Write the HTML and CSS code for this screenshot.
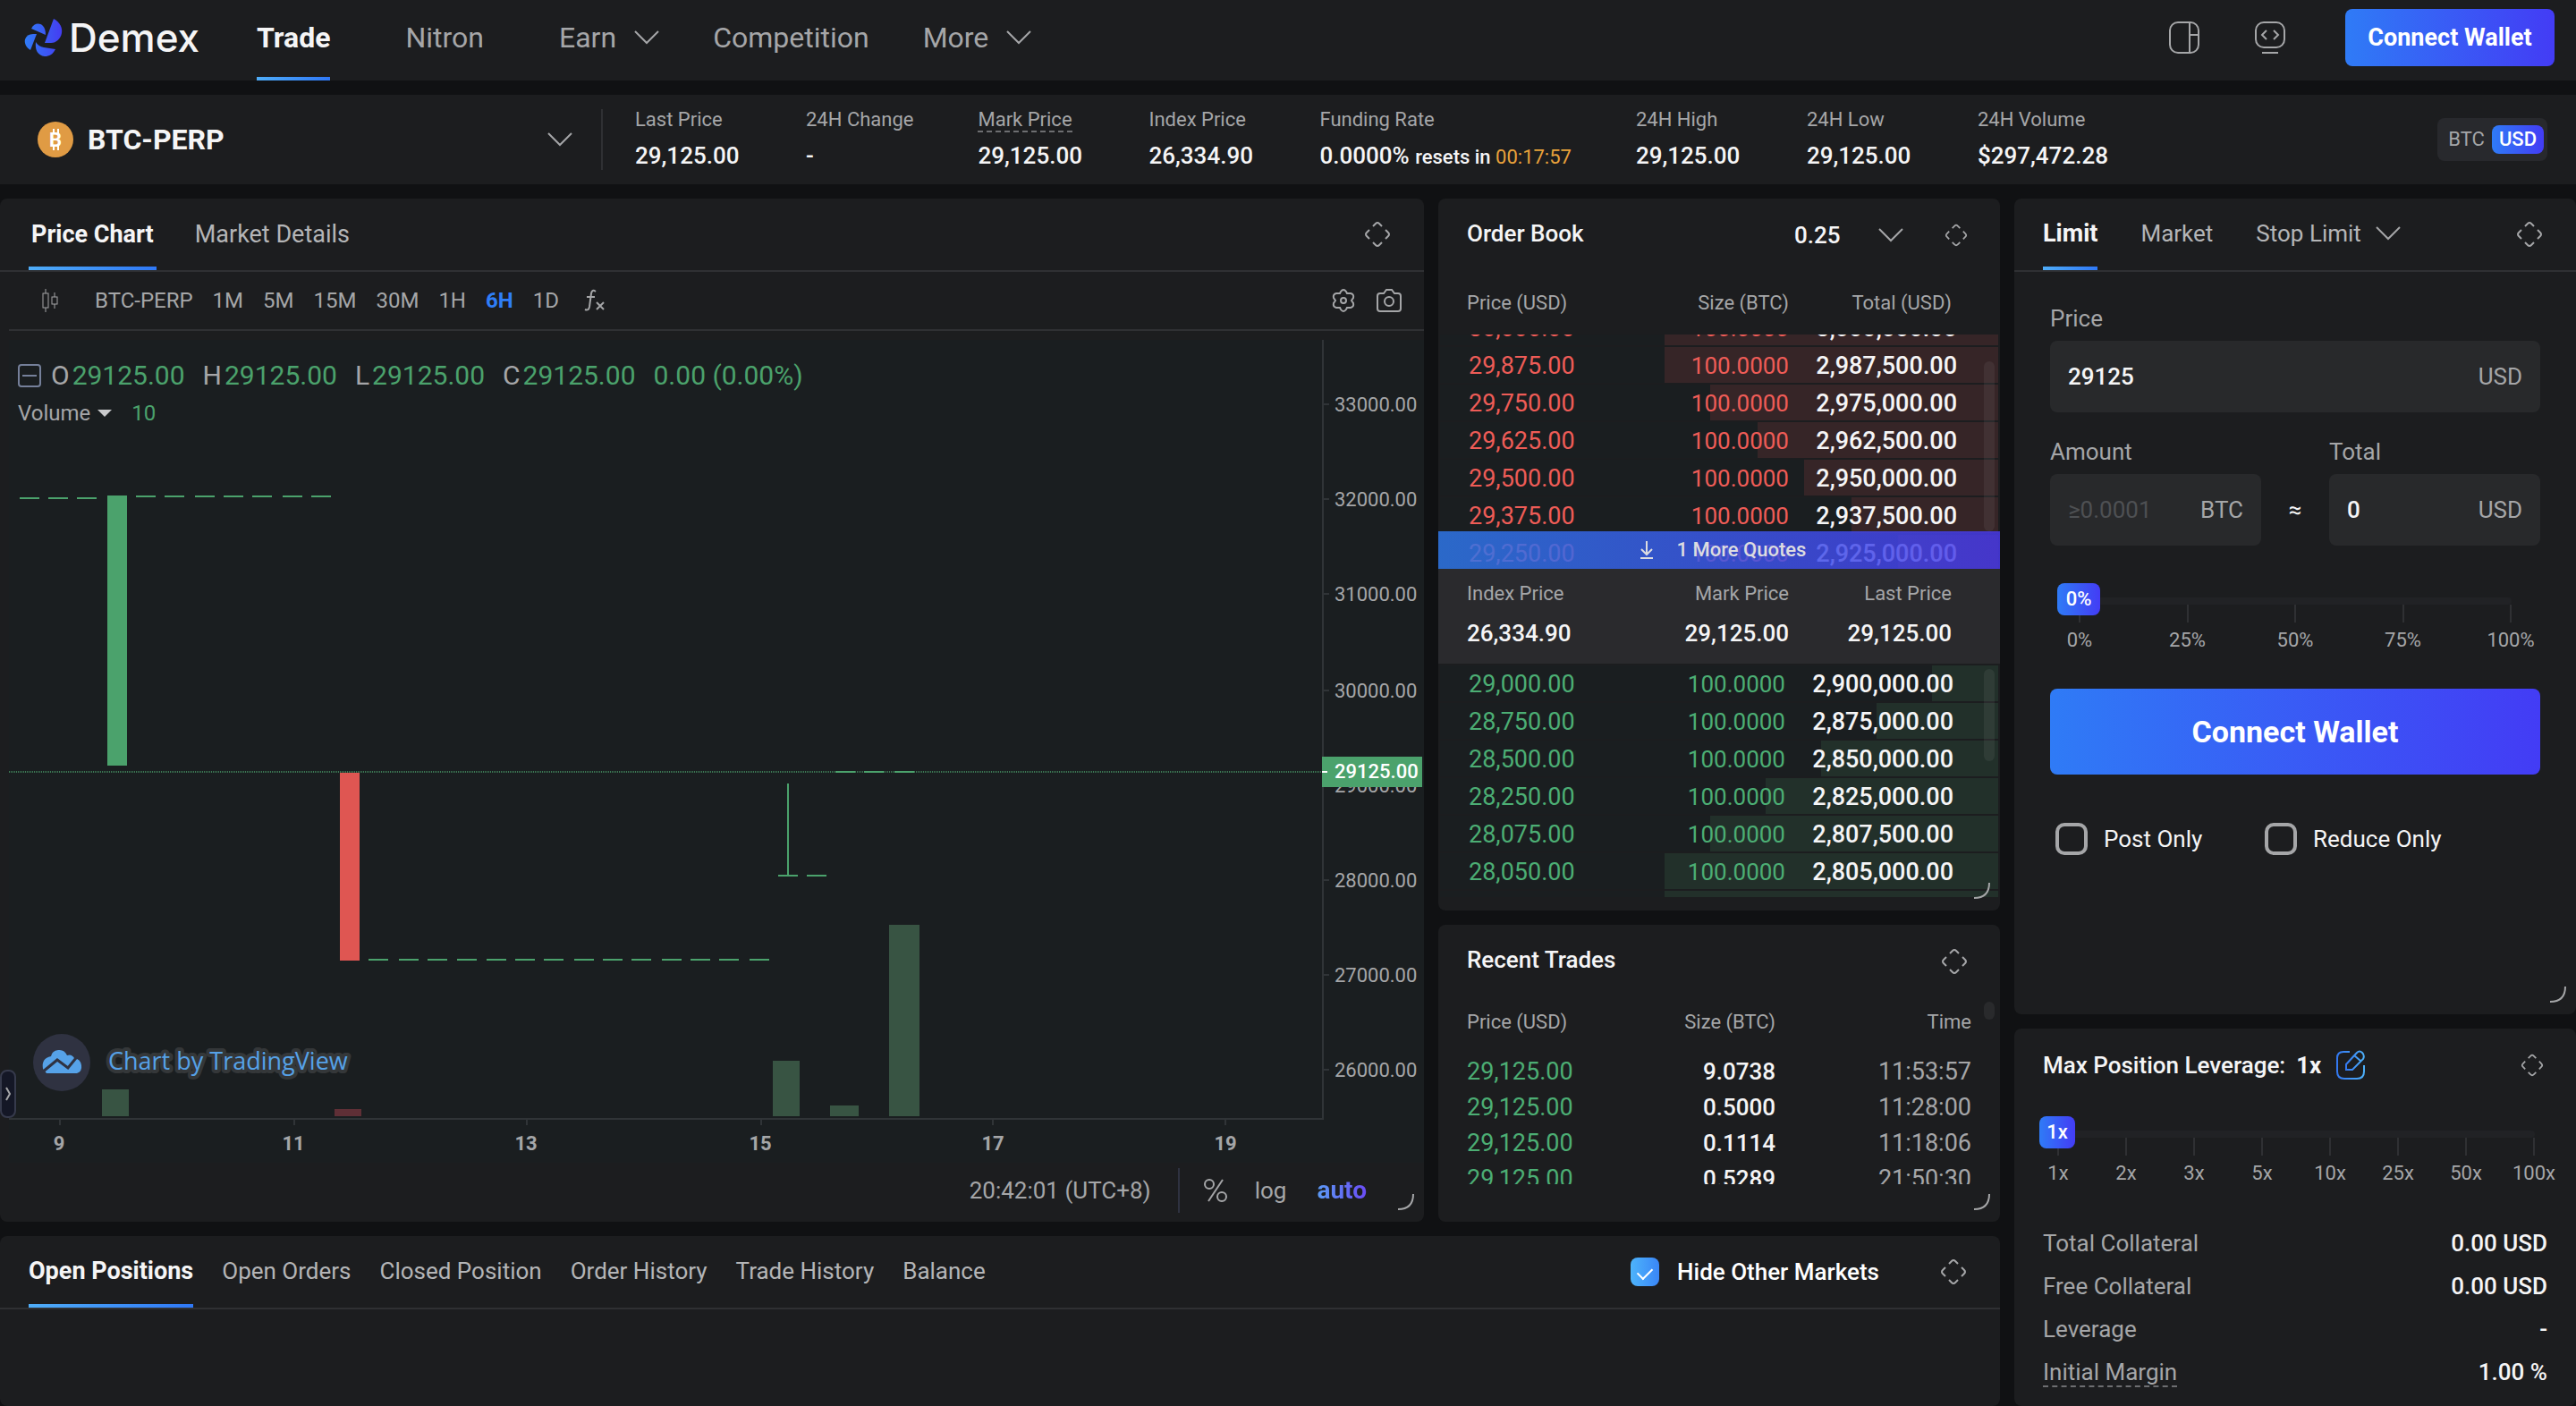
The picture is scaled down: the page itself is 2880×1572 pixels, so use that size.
FILE: index.html
```html
<!DOCTYPE html>
<html lang="en">
<head>
    <meta charset="UTF-8" />
    <meta name="viewport" content="width=device-width, initial-scale=1.0" />
    <title>Demex | BTC-PERP</title>
    <link rel="stylesheet" href="styles.css">
</head>
<body>
    <!-- shared icons -->
    <svg class="sprite" aria-hidden="true">
        <symbol id="chevron" viewBox="0 0 28 16"><path d="M1 1l13 13L27 1" /></symbol>
        <symbol id="move" viewBox="0 0 30 30">
            <path d="M10 6l3-3q2-2 4 0l3 3M10 24l3 3q2 2 4 0l3-3M6 10l-3 3q-2 2 0 4l3 3M24 10l3 3q2 2 0 4l-3 3" />
        </symbol>
        <symbol id="corner" viewBox="0 0 20 20"><path d="M18 1Q18 18 1 18" /></symbol>
        <linearGradient id="sky" x1="0" x2="1">
            <stop offset="0" stop-color="#3378f0" />
            <stop offset="1" stop-color="#4db0fa" />
        </linearGradient>
    </svg>

    <header class="header">
        <a class="logo" href="#">
            <svg viewBox="27 20 44 44" width="44" height="44">
                <linearGradient id="logoFill" gradientUnits="userSpaceOnUse" x1="27" y1="0" x2="70" y2="0">
                    <stop offset="0" stop-color="#2f7df6" />
                    <stop offset="1" stop-color="#453bf2" />
                </linearGradient>
                <g fill="url(#logoFill)">
                    <path d="M35 32C38 26 44 25 48 29Q51 32 51 39Z" />
                    <path d="M60 21C67 25 70 31 69 37C68 43 63 48 57 48H50Z" />
                    <path d="M41 38L34 56C29 53 27 48 28 44Q30 38 37 38Z" />
                    <path d="M40 47Q43 52 49 53L62 55C59 61 55 63 50 63C42 62 39 56 40 47Z" />
                </g>
            </svg>
            Demex
        </a>
        <nav class="nav">
            <a class="nav-link plain active" href="#">Trade</a>
            <a class="nav-link plain" href="#">Nitron</a>
            <button class="nav-link">Earn <svg class="chevron"><use href="#chevron" /></svg></button>
            <a class="nav-link" href="#">Competition</a>
            <button class="nav-link">More <svg class="chevron"><use href="#chevron" /></svg></button>
        </nav>
        <button class="icon-btn" aria-label="Layout">
            <svg class="line" width="36" height="36" viewBox="0 0 36 36"><rect x="2" y="1" width="32" height="34" rx="9" /><path d="M24 1v34M24 15h10" /></svg>
        </button>
        <button class="icon-btn api" aria-label="API">
            <svg class="line" width="36" height="36" viewBox="0 0 36 36"><rect x="2" y="1" width="32" height="28" rx="9" /><path d="M14 10l-5 5 5 5M22 10l5 5-5 5M9 35h18" /></svg>
        </button>
        <button class="btn-primary header-connect">Connect Wallet</button>
    </header>

    <section class="market-bar">
        <button class="market-select">
            <svg width="40" height="40" viewBox="0 0 40 40">
                <circle cx="20" cy="20" r="20" fill="#e09b44" />
                <path d="M18 8v5M23 8v5M18 27v5M23 27v5" stroke="#fff" stroke-width="2" />
                <text class="coin-letter" x="20" y="28" text-anchor="middle">B</text>
            </svg>
            <span>BTC-PERP</span>
            <svg class="chevron"><use href="#chevron" /></svg>
        </button>
        <dl class="stats">
            <div><dt>Last Price</dt><dd>29,125.00</dd></div>
            <div><dt>24H Change</dt><dd>-</dd></div>
            <div><dt><span class="hint">Mark Price</span></dt><dd>29,125.00</dd></div>
            <div><dt>Index Price</dt><dd>26,334.90</dd></div>
            <div><dt>Funding Rate</dt><dd>0.0000% <small>resets in <em>00:17:57</em></small></dd></div>
            <div><dt>24H High</dt><dd>29,125.00</dd></div>
            <div><dt>24H Low</dt><dd>29,125.00</dd></div>
            <div><dt>24H Volume</dt><dd>$297,472.28</dd></div>
        </dl>
        <div class="unit-toggle">
            <button>BTC</button>
            <button class="active">USD</button>
        </div>
    </section>

    <main class="workspace">
        <div class="left">
            <div class="top">
                <section class="panel chart-panel">
                    <div class="tabs">
                        <button class="tab active">Price Chart</button>
                        <button class="tab">Market Details</button>
                        <svg class="move"><use href="#move" /></svg>
                    </div>
                    <div class="toolbar">
                        <svg class="line thin" width="20" height="28" viewBox="0 0 20 28"><rect x="2" y="6" width="6" height="16" /><path d="M5 1v5M5 22v5M15 5v5M15 18v5" /><rect x="12" y="10" width="6" height="8" /></svg>
                        <span class="symbol">BTC-PERP</span>
                        <button>1M</button>
                        <button>5M</button>
                        <button>15M</button>
                        <button>30M</button>
                        <button>1H</button>
                        <button class="active">6H</button>
                        <button>1D</button>
                        <button class="fx" aria-label="Indicators">
                            <svg class="line" width="24" height="26" viewBox="0 0 24 26"><path d="M13 3q-4-3-5 2L6 20q-1 5-5 3M3 9h9M14 15l8 8M22 15l-8 8" /></svg>
                        </button>
                        <button class="gear" aria-label="Settings">
                            <svg class="line" width="28" height="28" viewBox="0 0 28 28"><path d="M11 4q3-4 6 0l1 2 4 0q4 1 3 5l-2 3 2 3q1 4-3 5h-4l-1 2q-3 4-6 0l-1-2H6q-4-1-3-5l2-3-2-3q-1-4 3-5h4z" /><circle cx="14" cy="14" r="3" /></svg>
                        </button>
                        <button aria-label="Snapshot">
                            <svg class="line" width="30" height="28" viewBox="0 0 30 28"><path d="M5 6h4l3-4h6l3 4h4q3 0 3 3v14q0 3-3 3H5q-3 0-3-3V9q0-3 3-3z" /><circle cx="15" cy="15" r="5" /></svg>
                        </button>
                    </div>
                    <div class="chart">
                        <svg class="plot" viewBox="10 380 1582 920">
                            <!-- axes -->
                            <path class="axis" d="M1479 380v872M10 1251h1469" />
                            <path class="axis" d="M1480 452h6M1480 558h6M1480 664h6M1480 772h6M1480 984h6M1480 1090h6M1480 1196h6" />
                            <path class="axis" d="M67 1252v6M329 1252v6M589 1252v6M851 1252v6M1110 1252v6M1370 1252v6" />
                            <g class="price-label">
                                <text x="1492" y="460">33000.00</text>
                                <text x="1492" y="566">32000.00</text>
                                <text x="1492" y="672">31000.00</text>
                                <text x="1492" y="780">30000.00</text>
                                <text x="1492" y="886">29000.00</text>
                                <text x="1492" y="992">28000.00</text>
                                <text x="1492" y="1098">27000.00</text>
                                <text x="1492" y="1204">26000.00</text>
                            </g>
                            <g class="time-label">
                                <text x="66" y="1286">9</text>
                                <text x="328" y="1286">11</text>
                                <text x="588" y="1286">13</text>
                                <text x="850" y="1286">15</text>
                                <text x="1110" y="1286">17</text>
                                <text x="1370" y="1286">19</text>
                            </g>
                            <!-- volume -->
                            <g class="vol-up">
                                <rect x="114" y="1218" width="30" height="30" />
                                <rect x="864" y="1186" width="30" height="62" />
                                <rect x="928" y="1236" width="32" height="12" />
                                <rect x="994" y="1034" width="34" height="214" />
                            </g>
                            <rect class="vol-down" x="374" y="1240" width="30" height="8" />
                            <!-- candles -->
                            <path class="flat" d="M22 557h22M54 557h22M86 557h22M152 555h22M184 555h22M218 555h22M250 555h22M282 555h22M316 555h22M348 555h22" />
                            <path class="flat" d="M412 1073h22M446 1073h22M478 1073h22M511 1073h22M544 1073h22M576 1073h22M608 1073h22M642 1073h22M674 1073h22M706 1073h22M740 1073h22M772 1073h22M804 1073h22M838 1073h22" />
                            <path class="flat" d="M870 979h22M902 979h22M881 876v103" />
                            <path class="last-line" d="M10 863h1468" />
                            <path class="flat" d="M934 863h22M966 863h22M1000 863h22" />
                            <rect class="up" x="120" y="554" width="22" height="302" />
                            <rect class="down" x="380" y="864" width="22" height="210" />
                            <!-- last price tag -->
                            <rect class="up" x="1478" y="846" width="112" height="34" />
                            <path d="M1478 863h6" stroke="#fff" stroke-width="2" />
                            <text class="tag" x="1492" y="870">29125.00</text>
                            <!-- attribution -->
                            <circle cx="69" cy="1188" r="32" fill="#2f3241" />
                            <path d="M52 1200h34q6-2 5-9t-8-8q-3-5-8-3-3-7-10-6-7 1-8 7-11 2-9 14z" fill="#56a2e8" />
                            <path d="M47 1199l17-14 12 9 13-16" fill="none" stroke="#2f3241" stroke-width="3" />
                            <text class="credit" x="121" y="1196">Chart by TradingView</text>
                        </svg>
                        <div class="legend">
                            <div class="ohlc">
                                <svg width="26" height="26" viewBox="0 0 26 26"><rect x="1" y="1" width="24" height="24" rx="3" /><path d="M5 13h16" /></svg>
                                <span>O<b>29125.00</b></span>
                                <span>H<b>29125.00</b></span>
                                <span>L<b>29125.00</b></span>
                                <span>C<b>29125.00</b></span>
                                <b>0.00 (0.00%)</b>
                            </div>
                            <div class="volume">Volume <i></i> <b>10</b></div>
                        </div>
                        <button class="drawer" aria-label="Show drawing toolbar">
                            <svg class="line" width="8" height="16" viewBox="0 0 8 16"><path d="M2 1l4 7-4 7" /></svg>
                        </button>
                    </div>
                    <div class="chart-foot">
                        <button>20:42:01 (UTC+8)</button>
                        <span class="divider"></span>
                        <button aria-label="Percent">
                            <svg class="line" width="28" height="26" viewBox="0 0 28 26"><circle cx="7" cy="6" r="5" /><circle cx="21" cy="20" r="5" /><path d="M22 1L6 25" /></svg>
                        </button>
                        <button>log</button>
                        <button class="auto">auto</button>
                    </div>
                    <svg class="corner"><use href="#corner" /></svg>
                </section>

                <div class="book-column">
                    <section class="panel book">
                        <div class="book-head">
                            <h2>Order Book</h2>
                            <label class="step">
                                <select aria-label="Price step"><option>0.25</option></select>
                                <svg class="chevron"><use href="#chevron" /></svg>
                            </label>
                            <svg class="move small"><use href="#move" /></svg>
                        </div>
                        <div class="book-labels">
                            <span>Price (USD)</span><span>Size (BTC)</span><span>Total (USD)</span>
                        </div>
                        <div class="asks">
                            <table>
                                <tr style="--depth: 373px"><td>30,000.00</td><td>100.0000</td><td>3,000,000.00</td></tr>
                                <tr style="--depth: 373px"><td>29,875.00</td><td>100.0000</td><td>2,987,500.00</td></tr>
                                <tr style="--depth: 322px"><td>29,750.00</td><td>100.0000</td><td>2,975,000.00</td></tr>
                                <tr style="--depth: 269px"><td>29,625.00</td><td>100.0000</td><td>2,962,500.00</td></tr>
                                <tr style="--depth: 217px"><td>29,500.00</td><td>100.0000</td><td>2,950,000.00</td></tr>
                                <tr style="--depth: 164px"><td>29,375.00</td><td>100.0000</td><td>2,937,500.00</td></tr>
                                <tr style="--depth: 112px"><td>29,250.00</td><td>100.0000</td><td>2,925,000.00</td></tr>
                            </table>
                            <span class="scrollbar"></span>
                            <button class="more-quotes">
                                <svg width="16" height="20" viewBox="0 0 16 20"><path d="M8 0v14M2 9l6 6 6-6M1 19h14" /></svg>
                                1 More Quotes
                            </button>
                        </div>
                        <div class="mid">
                            <span>Index Price</span><span>Mark Price</span><span>Last Price</span>
                            <strong>26,334.90</strong><strong>29,125.00</strong><strong>29,125.00</strong>
                        </div>
                        <div class="bids">
                            <table>
                                <tr style="--depth: 74px"><td>29,000.00</td><td>100.0000</td><td>2,900,000.00</td></tr>
                                <tr style="--depth: 136px"><td>28,750.00</td><td>100.0000</td><td>2,875,000.00</td></tr>
                                <tr style="--depth: 198px"><td>28,500.00</td><td>100.0000</td><td>2,850,000.00</td></tr>
                                <tr style="--depth: 260px"><td>28,250.00</td><td>100.0000</td><td>2,825,000.00</td></tr>
                                <tr style="--depth: 322px"><td>28,075.00</td><td>100.0000</td><td>2,807,500.00</td></tr>
                                <tr style="--depth: 373px"><td>28,050.00</td><td>100.0000</td><td>2,805,000.00</td></tr>
                                <tr style="--depth: 373px"><td></td><td></td><td></td></tr>
                            </table>
                            <span class="scrollbar"></span>
                        </div>
                        <svg class="corner"><use href="#corner" /></svg>
                    </section>

                    <section class="panel trades">
                        <div class="book-head">
                            <h2>Recent Trades</h2>
                            <svg class="move"><use href="#move" /></svg>
                        </div>
                        <div class="trade-list">
                            <table>
                                <thead><tr><th>Price (USD)</th><th>Size (BTC)</th><th>Time</th></tr></thead>
                                <tbody>
                                    <tr><td>29,125.00</td><td>9.0738</td><td>11:53:57</td></tr>
                                    <tr><td>29,125.00</td><td>0.5000</td><td>11:28:00</td></tr>
                                    <tr><td>29,125.00</td><td>0.1114</td><td>11:18:06</td></tr>
                                    <tr><td>29,125.00</td><td>0.5289</td><td>21:50:30</td></tr>
                                </tbody>
                            </table>
                            <span class="scrollbar"></span>
                        </div>
                        <svg class="corner"><use href="#corner" /></svg>
                    </section>
                </div>
            </div>

            <section class="panel positions">
                <div class="tabs">
                    <button class="tab active">Open Positions</button>
                    <button class="tab">Open Orders</button>
                    <button class="tab">Closed Position</button>
                    <button class="tab">Order History</button>
                    <button class="tab">Trade History</button>
                    <button class="tab">Balance</button>
                    <label class="check hide-others"><input type="checkbox" checked> Hide Other Markets</label>
                    <svg class="move"><use href="#move" /></svg>
                </div>
            </section>
        </div>

        <aside class="right">
            <section class="panel order">
                <div class="tabs">
                    <button class="tab active">Limit</button>
                    <button class="tab">Market</button>
                    <button class="tab">Stop Limit <svg class="chevron"><use href="#chevron" /></svg></button>
                    <svg class="move"><use href="#move" /></svg>
                </div>
                <form class="order-form">
                    <div class="field">
                        <label for="price">Price</label>
                        <div class="input"><input id="price" type="text" value="29125"><span>USD</span></div>
                    </div>
                    <div class="field-row">
                        <div class="field">
                            <label for="amount">Amount</label>
                            <div class="input"><input id="amount" type="text" placeholder="≥0.0001"><span>BTC</span></div>
                        </div>
                        <span class="approx">≈</span>
                        <div class="field">
                            <label for="total">Total</label>
                            <div class="input"><input id="total" type="text" value="0"><span>USD</span></div>
                        </div>
                    </div>
                    <div class="slider percent">
                        <input type="range" min="0" max="100" value="0" aria-label="Percent of balance">
                        <output>0%</output>
                        <ul><li>0%</li><li>25%</li><li>50%</li><li>75%</li><li>100%</li></ul>
                    </div>
                    <button type="button" class="btn-primary connect">Connect Wallet</button>
                    <div class="checks">
                        <label class="check"><input type="checkbox"> Post Only</label>
                        <label class="check"><input type="checkbox"> Reduce Only</label>
                    </div>
                </form>
                <svg class="corner"><use href="#corner" /></svg>
            </section>

            <section class="panel leverage">
                <div class="leverage-head">
                    <h2>Max Position Leverage:</h2>
                    <strong>1x</strong>
                    <button aria-label="Edit leverage">
                        <svg width="34" height="34" viewBox="0 0 34 34" fill="none" stroke="url(#sky)" stroke-width="2"><path d="M16 2H9Q2 2 2 9v15q0 8 8 8h14q8 0 8-8v-7" /><path d="M12 22v-6L24 3q3-3 6 0t1 7L19 22zM21 6l7 6" /></svg>
                    </button>
                    <svg class="move small"><use href="#move" /></svg>
                </div>
                <div class="slider multiple">
                    <input type="range" min="0" max="7" value="0" aria-label="Leverage">
                    <output>1x</output>
                    <ul><li>1x</li><li>2x</li><li>3x</li><li>5x</li><li>10x</li><li>25x</li><li>50x</li><li>100x</li></ul>
                </div>
                <dl class="account">
                    <div><dt>Total Collateral</dt><dd>0.00 USD</dd></div>
                    <div><dt>Free Collateral</dt><dd>0.00 USD</dd></div>
                    <div><dt>Leverage</dt><dd>-</dd></div>
                    <div><dt><span class="hint">Initial Margin</span></dt><dd>1.00 %</dd></div>
                </dl>
            </section>
        </aside>
    </main>
</body>
</html>
```
FILE: styles.css
```css
* {
    box-sizing: border-box;
}
body {
    margin: 0;
    height: 100vh;
    overflow: hidden;
    display: flex;
    flex-direction: column;
    gap: 16px;
    background-color: #101113;
    color: #f5f5f6;
    font-family: Roboto, "Liberation Sans", sans-serif;
    font-size: 26px;
    line-height: 32px;
}
button,
input,
select {
    font: inherit;
    color: inherit;
    background: none;
    border: none;
    padding: 0;
    margin: 0;
}
button {
    cursor: pointer;
    display: flex;
    align-items: center;
}
a {
    color: inherit;
    text-decoration: none;
}
h2 {
    margin: 0;
    font-size: 26px;
    font-weight: 500;
}
dl,
dd,
ul {
    margin: 0;
    padding: 0;
}
svg {
    display: block;
    flex: none;
}
.sprite {
    position: absolute;
    width: 0;
    height: 0;
}
.chevron,
.move,
.corner,
.line {
    fill: none;
    stroke: #a5a6a8;
    stroke-width: 2;
}
.line.thin {
    stroke-width: 1;
}
.chevron {
    width: 28px;
    height: 16px;
}
.move {
    width: 30px;
    height: 30px;
    margin-left: auto;
}
.move.small {
    width: 26px;
    height: 26px;
}
.corner {
    position: absolute;
    right: 10px;
    bottom: 12px;
    width: 20px;
    height: 20px;
}
.hint {
    border-bottom: 2px dashed #6d6e71;
}
.btn-primary {
    justify-content: center;
    background: linear-gradient(90deg, #2f7bf6, #433cf5);
    border-radius: 8px;
    color: #fff;
    font-weight: 700;
}

/* header */
.header {
    display: flex;
    align-items: center;
    height: 90px;
    padding: 0 24px 6px 27px;
    background-color: #1c1d1f;
}
.logo {
    display: flex;
    align-items: center;
    gap: 6px;
    margin-right: 64px;
    font-family: Inter, sans-serif;
    font-size: 44px;
    font-weight: 500;
}
.nav {
    display: flex;
    align-self: flex-start;
    gap: 60px;
    height: 90px;
    margin-right: auto;
    font-size: 32px;
    color: #a5a6a8;
}
.nav-link {
    display: flex;
    align-items: center;
    gap: 20px;
    padding: 0 0 6px;
}
.nav-link.plain {
    margin-right: 24px;
}
.nav-link.active {
    padding-top: 4px;
    color: #f5f5f6;
    font-weight: 700;
    border-bottom: 4px solid;
    border-image: linear-gradient(90deg, #4fadf8, #2f78f6) 0 0 4;
}
.icon-btn {
    margin-right: 60px;
}
.icon-btn.api {
    margin-right: 66px;
}
.header-connect {
    width: 234px;
    height: 64px;
    font-size: 27px;
}

/* market bar */
.market-bar {
    display: flex;
    align-items: center;
    height: 100px;
    padding: 0 32px 0 42px;
    background-color: #1c1d1f;
}
.market-select {
    width: 632px;
    height: 68px;
    gap: 16px;
    padding-right: 32px;
    border-right: 2px solid #2f3033;
    font-size: 32px;
    font-weight: 700;
}
.market-select .chevron {
    margin-left: auto;
}
.coin-letter {
    fill: #fff;
    font-size: 22px;
    font-weight: 700;
}
.stats {
    display: flex;
    gap: 72px;
    margin: 0 auto 0 36px;
    padding-bottom: 2px;
}
.stats div {
    min-width: 119px;
}
.stats dt {
    margin-bottom: 8px;
    font-size: 22px;
    color: #a5a6a8;
}
.stats dd {
    font-size: 26px;
    font-weight: 500;
}
.stats small {
    font-size: 22px;
}
.stats em {
    font-style: normal;
    font-weight: 400;
    color: #e9a23b;
}
.unit-toggle {
    display: flex;
    align-items: center;
    gap: 8px;
    height: 48px;
    padding: 0 4px 0 12px;
    border-radius: 8px;
    background-color: #28292d;
    font-size: 22px;
    color: #a5a6a8;
}
.unit-toggle .active {
    height: 32px;
    padding: 0 8px;
    border-radius: 8px;
    background: linear-gradient(90deg, #2f7bf6, #433cf5);
    color: #fff;
    font-weight: 500;
}

/* layout */
.workspace {
    flex: 1;
    min-height: 0;
    display: flex;
    gap: 16px;
}
.left {
    flex: 2236;
    min-width: 0;
    display: flex;
    flex-direction: column;
    gap: 16px;
}
.right {
    flex: 628;
    min-width: 0;
    display: flex;
    flex-direction: column;
    gap: 16px;
}
.top {
    display: grid;
    grid-template-columns: 1592fr 628fr;
    gap: 16px;
}
.panel {
    position: relative;
    border-radius: 8px;
    background-color: #1c1d1f;
}
.tabs {
    display: flex;
    gap: 32px;
    height: 82px;
    padding: 0 37px 0 32px;
    border-bottom: 2px solid #2f3033;
    color: #b4b5b7;
}
.tabs .move {
    align-self: center;
}
.tab {
    gap: 16px;
    height: 80px;
    padding-bottom: 2px;
}
.tab.active {
    color: #f5f5f6;
    font-size: 27px;
    font-weight: 700;
    border-bottom: 4px solid;
    border-top: 4px solid transparent;
    border-image: linear-gradient(90deg, #4fadf8, #2f78f6) 0 0 4;
}

/* chart */
.toolbar {
    display: flex;
    align-items: center;
    gap: 22px;
    height: 66px;
    margin-left: 10px;
    padding: 0 24px 0 36px;
    border-bottom: 2px solid #2f3033;
    font-size: 24px;
    color: #a5a6a8;
}
.toolbar .symbol {
    margin-left: 18px;
}
.toolbar .active {
    color: #2f7ef7;
    font-weight: 700;
}
.toolbar .fx {
    margin-left: 6px;
}
.toolbar .gear {
    margin-left: auto;
}
.chart-panel .tabs {
    gap: 40px;
}
.chart-panel .tab {
    padding: 0 3px;
    font-size: 27px;
}
.chart {
    position: relative;
    margin: 10px 0 0 10px;
    background-color: #1a1e20;
}
.plot {
    width: 100%;
}
.axis {
    fill: none;
    stroke: #303437;
    stroke-width: 2;
}
.price-label,
.time-label {
    fill: #a5a6a8;
    font-size: 22px;
}
.time-label {
    font-weight: 700;
    text-anchor: middle;
}
.tag {
    fill: #fff;
    font-size: 22px;
    font-weight: 500;
}
.flat {
    stroke: #4ba26c;
    stroke-width: 2;
}
.last-line {
    stroke: #4ba26c;
    stroke-width: 2;
    stroke-dasharray: 1 1;
    opacity: 0.7;
}
.up {
    fill: #4ba26c;
}
.down {
    fill: #df5652;
}
.vol-up {
    fill: #385443;
}
.vol-down {
    fill: #5f2f36;
}
.credit {
    fill: #56a2e8;
    font-family: "Open Sans", sans-serif;
    font-size: 27px;
    stroke: #343739;
    stroke-width: 8px;
    stroke-linejoin: round;
    paint-order: stroke;
}
.legend {
    position: absolute;
    top: 22px;
    left: 10px;
    color: #a5a6a8;
}
.legend b {
    color: #4ba26c;
    font-weight: 400;
}
.ohlc {
    display: flex;
    align-items: center;
    gap: 20px;
    height: 36px;
    font-size: 30px;
}
.ohlc span {
    display: flex;
    gap: 3px;
}
.ohlc svg {
    margin-right: -9px;
    fill: none;
    stroke: #75809a;
    stroke-width: 2;
}
.volume {
    display: flex;
    align-items: center;
    gap: 8px;
    margin-top: 8px;
    font-size: 24px;
}
.volume i {
    margin-right: 14px;
    border: 8px solid transparent;
    border-top-color: #c9cacc;
    border-bottom: 0;
}
.drawer {
    position: absolute;
    left: -10px;
    bottom: 50px;
    width: 18px;
    height: 54px;
    justify-content: center;
    border: 2px solid #363a4c;
    border-radius: 8px;
    background-color: #141726;
}
.chart-foot {
    display: flex;
    align-items: center;
    justify-content: flex-end;
    gap: 30px;
    height: 66px;
    padding: 0 64px 4px;
    color: #a5a6a8;
}
.divider {
    width: 2px;
    height: 50px;
    background-color: #2f3241;
    margin-right: -4px;
}
.auto {
    margin-left: 4px;
    font-size: 28px;
    font-weight: 700;
    color: transparent;
    background: linear-gradient(90deg, #5b9bf5, #6a4cf5);
    background-clip: text;
}

/* order book */
.book-column {
    display: flex;
    flex-direction: column;
    gap: 16px;
}
.book {
    height: 796px;
}
.book-head {
    display: flex;
    align-items: center;
    height: 82px;
    padding: 0 36px 0 32px;
}
.book-head h2 {
    padding-bottom: 4px;
}
.book-head .move.small {
    margin-left: 46px;
}
.step {
    display: flex;
    align-items: center;
    gap: 42px;
    margin-left: auto;
}
.step select {
    appearance: none;
    font-weight: 500;
}
.book-labels,
.mid {
    display: grid;
    grid-template-columns: 1fr 1fr 182px;
    align-items: center;
    padding: 0 54px 0 32px;
    font-size: 22px;
    color: #a5a6a8;
}
.book-labels span:nth-child(3n + 2),
.book-labels span:nth-child(3n),
.mid > :nth-child(3n + 2),
.mid > :nth-child(3n) {
    text-align: right;
}
.book-labels {
    height: 70px;
}
.mid {
    height: 106px;
    padding-top: 6px;
    padding-bottom: 12px;
    background-color: #2a2a2d;
}
.mid strong {
    font-size: 26px;
    font-weight: 500;
    color: #f5f5f6;
}
.asks,
.bids {
    position: relative;
    overflow: hidden;
}
.asks {
    height: 262px;
}
.bids {
    height: 261px;
}
table {
    width: 100%;
    border-collapse: collapse;
}
td,
th {
    padding: 0;
    font-weight: 400;
    text-align: right;
}
td:first-child,
th:first-child {
    text-align: left;
}
.book table {
    width: calc(100% - 4px);
    margin: 0 2px;
    table-layout: fixed;
    border-collapse: separate;
    border-spacing: 0 2px;
}
.asks table {
    margin-top: -30px;
}
.book tr {
    height: 40px;
    background: linear-gradient(270deg, var(--bar) var(--depth), #1a1e20 var(--depth));
}
.asks tr {
    --bar: #362527;
}
.bids tr {
    --bar: #22302a;
}
.book td {
    padding-top: 2px;
    font-size: 27px;
}
.book td:first-child {
    padding-left: 32px;
    width: 200px;
}
.book td:nth-child(2) {
    font-size: 26px;
}
.book td:last-child {
    width: 234px;
    padding-right: 46px;
    font-weight: 500;
}
.bids td:nth-child(2) {
    padding-right: 4px;
}
.bids td:last-child {
    padding-right: 50px;
}
.asks td {
    color: #ee5c57;
}
.bids td,
.trades td {
    color: #4cae74;
}
.book td:last-child {
    color: #f5f5f6;
}
.scrollbar {
    position: absolute;
    top: 30px;
    bottom: 42px;
    right: 6px;
    width: 12px;
    border-radius: 6px;
    background-color: rgba(255, 255, 255, 0.06);
}
.bids .scrollbar {
    top: 6px;
    bottom: 152px;
}
.more-quotes {
    position: absolute;
    left: 0;
    right: 0;
    bottom: 0;
    height: 42px;
    justify-content: center;
    gap: 26px;
    padding-left: 8px;
    background: linear-gradient(90deg, rgba(46, 119, 233, 0.84), rgba(72, 57, 233, 0.84));
    font-size: 22px;
    font-weight: 500;
    color: #dcdce0;
}
.more-quotes svg {
    fill: none;
    stroke: #dcdce0;
    stroke-width: 2;
}

/* recent trades */
.trades {
    flex: 1;
}
.trade-list {
    position: relative;
    height: 208px;
    overflow: hidden;
}
.trades table {
    margin-left: 32px;
    width: calc(100% - 64px);
}
.trades th {
    height: 62px;
    padding-bottom: 8px;
    font-size: 22px;
    color: #a5a6a8;
}
.trades td {
    height: 40px;
    font-size: 27px;
}
.trades tr > :nth-child(2) {
    width: 180px;
}
.trades tr > :nth-child(3) {
    width: 219px;
}
.trades td:nth-child(2) {
    color: #f5f5f6;
    font-weight: 500;
    font-size: 26px;
}
.trades td:nth-child(3) {
    color: #a5a6a8;
}
.trades .scrollbar {
    top: 4px;
    bottom: auto;
    height: 20px;
}

/* positions */
.positions {
    flex: 1;
}
.check {
    display: flex;
    align-items: center;
    gap: 20px;
}
.check input {
    appearance: none;
    width: 36px;
    height: 36px;
    border: 4px solid #a5a6a8;
    border-radius: 10px;
}
.check input:checked {
    width: 32px;
    height: 32px;
    border: none;
    border-radius: 8px;
    background: linear-gradient(90deg, #4db4fb, #3a86f7);
    display: grid;
    place-items: center;
}
.check input:checked::after {
    content: "";
    width: 8px;
    height: 14px;
    border: solid #fff;
    border-width: 0 2px 2px 0;
    transform: rotate(45deg);
}
.hide-others {
    margin-left: auto;
    font-weight: 500;
    color: #fff;
}
.hide-others + .move {
    margin-left: 36px;
}

/* order form */
.order .tabs {
    gap: 48px;
}
.order {
    min-height: 912px;
}
.order-form {
    padding: 36px 40px 0;
}
.field {
    display: flex;
    flex-direction: column;
    gap: 8px;
    color: #a5a6a8;
}
.field label {
    height: 33px;
}
.input {
    display: flex;
    align-items: center;
    height: 80px;
    padding: 0 20px;
    border-radius: 8px;
    background-color: #28292b;
}
.input input {
    flex: 1;
    width: 0;
    color: #f5f5f6;
    font-weight: 500;
    outline: none;
}
.input input::placeholder {
    color: #4e5053;
    font-weight: 400;
}
.field-row {
    display: grid;
    grid-template-columns: 1fr 76px 1fr;
    margin: 28px 0 42px;
}
.approx {
    align-self: end;
    padding-bottom: 24px;
    text-align: center;
}

/* sliders */
.slider {
    position: relative;
    padding-top: 16px;
    font-size: 22px;
}
.slider input {
    appearance: none;
    display: block;
    width: calc(100% - 64px);
    height: 8px;
    margin-left: 32px;
    border-radius: 4px;
    background-color: #212225;
}
.slider input::-webkit-slider-thumb {
    appearance: none;
    width: 1px;
    height: 8px;
}
.slider output {
    position: absolute;
    top: 0;
    left: 8px;
    width: 48px;
    height: 36px;
    border-radius: 8px;
    background: linear-gradient(90deg, #2f7bf6, #433cf5);
    color: #fff;
    font-weight: 500;
    line-height: 36px;
    text-align: center;
    pointer-events: none;
}
.slider ul {
    display: flex;
    justify-content: space-between;
    list-style: none;
    color: #a5a6a8;
}
.slider li {
    width: 66px;
    padding-top: 24px;
    text-align: center;
    background: linear-gradient(#2f3033, #2f3033) center top / 2px 20px no-repeat;
}
.connect {
    width: 100%;
    height: 96px;
    margin-top: 38px;
    font-size: 34px;
}
.checks {
    display: grid;
    grid-template-columns: 234px 1fr;
    padding: 54px 6px 0;
}
.checks .check {
    gap: 18px;
}

/* leverage */
.leverage {
    flex: 1;
    padding: 20px 32px 0;
}
.leverage-head {
    display: flex;
    align-items: center;
    height: 42px;
    gap: 12px;
}
.leverage-head button {
    margin-left: 4px;
}
.leverage .move {
    margin-right: 4px;
}
.multiple {
    margin: 36px -18px 38px -16px;
}
.multiple output {
    left: 12px;
    width: 40px;
}
.account div {
    display: flex;
    justify-content: space-between;
    height: 48px;
    padding-top: 8px;
}
.account dt {
    color: #a5a6a8;
}
.account dd {
    font-weight: 500;
}
```
